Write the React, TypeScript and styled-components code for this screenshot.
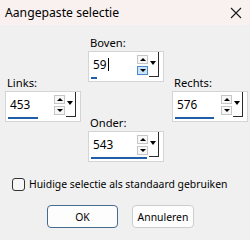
import styled, { createGlobalStyle } from "styled-components";

type Field = {
  label: string;
  value: string;
  col: number;
  row: number;
  fill: number;
  focused?: boolean;
};

const fields: Field[] = [
  { label: "Boven:", value: "59", col: 2, row: 1, fill: 6, focused: true },
  { label: "Links:", value: "453", col: 1, row: 2, fill: 30 },
  { label: "Rechts:", value: "576", col: 3, row: 2, fill: 39 },
  { label: "Onder:", value: "543", col: 2, row: 3, fill: 56 },
];

export default function App() {
  return (
    <Window>
      <GlobalStyle />
      <TitleBar>
        <Title>Aangepaste selectie</Title>
        <CloseIcon width="12" height="12" viewBox="0 0 12 12">
          <path d="M1 1 L11 11 M11 1 L1 11" stroke="#1a1a1a" strokeWidth="1.1" fill="none" />
        </CloseIcon>
      </TitleBar>

      <Body>
        <FieldGrid>
          {fields.map((f) => (
            <FieldGroup key={f.label} $col={f.col} $row={f.row}>
              <Label>{f.label}</Label>
              <SpinBox>
                <ValueText>
                  {f.value}
                  {f.focused && <Caret />}
                </ValueText>
                <SpinButtons>
                  <SpinButton>
                    <Arrow $dir="up" />
                  </SpinButton>
                  <SpinButton $active={f.focused}>
                    <Arrow $dir="down" />
                  </SpinButton>
                </SpinButtons>
                <DropButton>
                  <DropArrow />
                </DropButton>
                <FillBar $width={f.fill} />
              </SpinBox>
            </FieldGroup>
          ))}
        </FieldGrid>

        <CheckRow>
          <CheckBox />
          <CheckLabel>Huidige selectie als standaard gebruiken</CheckLabel>
        </CheckRow>

        <ButtonRow>
          <DialogButton $primary $width={71}>
            OK
          </DialogButton>
          <DialogButton $width={62}>Annuleren</DialogButton>
        </ButtonRow>
      </Body>
    </Window>
  );
}

const GlobalStyle = createGlobalStyle`
  body {
    margin: 0;
    background: #f0f0f0;
    font-family: "Noto Sans", "Open Sans", sans-serif;
  }
`;

const Window = styled.div`
  width: 250px;
  height: 240px;
  display: flex;
  flex-direction: column;
  background: #f0f0f0;
  overflow: hidden;
`;

const TitleBar = styled.div`
  height: 25px;
  display: flex;
  align-items: center;
  justify-content: space-between;
  padding: 0 8px 0 5px;
  background: #f9f1ef;
`;

const Title = styled.span`
  font-size: 12.2px;
  color: #000;
`;

const CloseIcon = styled.svg`
  margin-top: 1px;
`;

const Body = styled.div`
  display: flex;
  flex-direction: column;
  padding-top: 11px;
`;

const FieldGrid = styled.div`
  display: grid;
  grid-template-columns: 83px 84px 76px;
  grid-template-rows: repeat(3, 40px);
  padding-left: 5px;
`;

const FieldGroup = styled.div<{ $col: number; $row: number }>`
  grid-column: ${({ $col }) => $col};
  grid-row: ${({ $row }) => $row};
  display: flex;
  flex-direction: column;
  align-self: start;
`;

const Label = styled.div`
  font-size: 11.2px;
  line-height: 14px;
  height: 15px;
  padding-left: 2px;
  color: #000;
`;

const SpinBox = styled.div`
  position: relative;
  width: 76px;
  height: 31px;
  box-sizing: border-box;
  border: 1px solid #d4d4d4;
  background: #fff;
  display: flex;
  align-items: flex-start;
`;

const ValueText = styled.div`
  width: 48px;
  padding: 5px 0 0 4px;
  box-sizing: border-box;
  font-size: 11.8px;
  line-height: 14px;
  color: #000;
  display: flex;
  align-items: center;
`;

const Caret = styled.span`
  display: inline-block;
  width: 1px;
  height: 13px;
  background: #000;
  margin-left: 1px;
`;

const SpinButtons = styled.div`
  display: flex;
  flex-direction: column;
  gap: 2px;
  padding-top: 3px;
`;

const SpinButton = styled.div<{ $active?: boolean }>`
  width: 11px;
  height: 9px;
  box-sizing: border-box;
  border: 1px solid ${({ $active }) => ($active ? "#4d8ccb" : "#c6c6c6")};
  background: ${({ $active }) => ($active ? "#cce4f7" : "#f7f7f7")};
  display: flex;
  align-items: center;
  justify-content: center;
`;

const Arrow = styled.div<{ $dir: "up" | "down" }>`
  width: 0;
  height: 0;
  border-left: 3px solid transparent;
  border-right: 3px solid transparent;
  ${({ $dir }) =>
    $dir === "up" ? "border-bottom: 3px solid #000;" : "border-top: 3px solid #000;"}
`;

const DropButton = styled.div`
  width: 10px;
  height: 25px;
  margin-left: 1px;
  box-sizing: border-box;
  border-right: 1px solid #2b2b2b;
  border-bottom: 1px solid #2b2b2b;
  display: flex;
  justify-content: center;
  padding-top: 9px;
  padding-right: 1px;
`;

const DropArrow = styled.div`
  width: 0;
  height: 0;
  border-left: 3.5px solid transparent;
  border-right: 3.5px solid transparent;
  border-top: 4px solid #000;
`;

const FillBar = styled.div<{ $width: number }>`
  position: absolute;
  left: 2px;
  top: 25px;
  height: 2px;
  width: ${({ $width }) => $width}px;
  background: #1f5fa8;
`;

const CheckRow = styled.div`
  display: flex;
  align-items: center;
  gap: 4px;
  margin-top: 21px;
  padding-left: 12px;
  height: 14px;
`;

const CheckBox = styled.div`
  width: 13px;
  height: 13px;
  box-sizing: border-box;
  border: 1px solid #333;
  border-radius: 3px;
  background: #f7f7f7;
`;

const CheckLabel = styled.span`
  font-size: 10.4px;
  color: #000;
  white-space: nowrap;
`;

const ButtonRow = styled.div`
  display: flex;
  gap: 14px;
  margin-top: 14px;
  padding-left: 47px;
`;

const DialogButton = styled.button<{ $primary?: boolean; $width: number }>`
  width: ${({ $width }) => $width}px;
  height: 23px;
  box-sizing: border-box;
  border: 1px solid ${({ $primary }) => ($primary ? "#476a92" : "#cdcdcd")};
  border-radius: 4px;
  background: #fdfdfd;
  font-family: inherit;
  font-size: 10.4px;
  color: #000;
  padding: 0;
  cursor: pointer;
`;
